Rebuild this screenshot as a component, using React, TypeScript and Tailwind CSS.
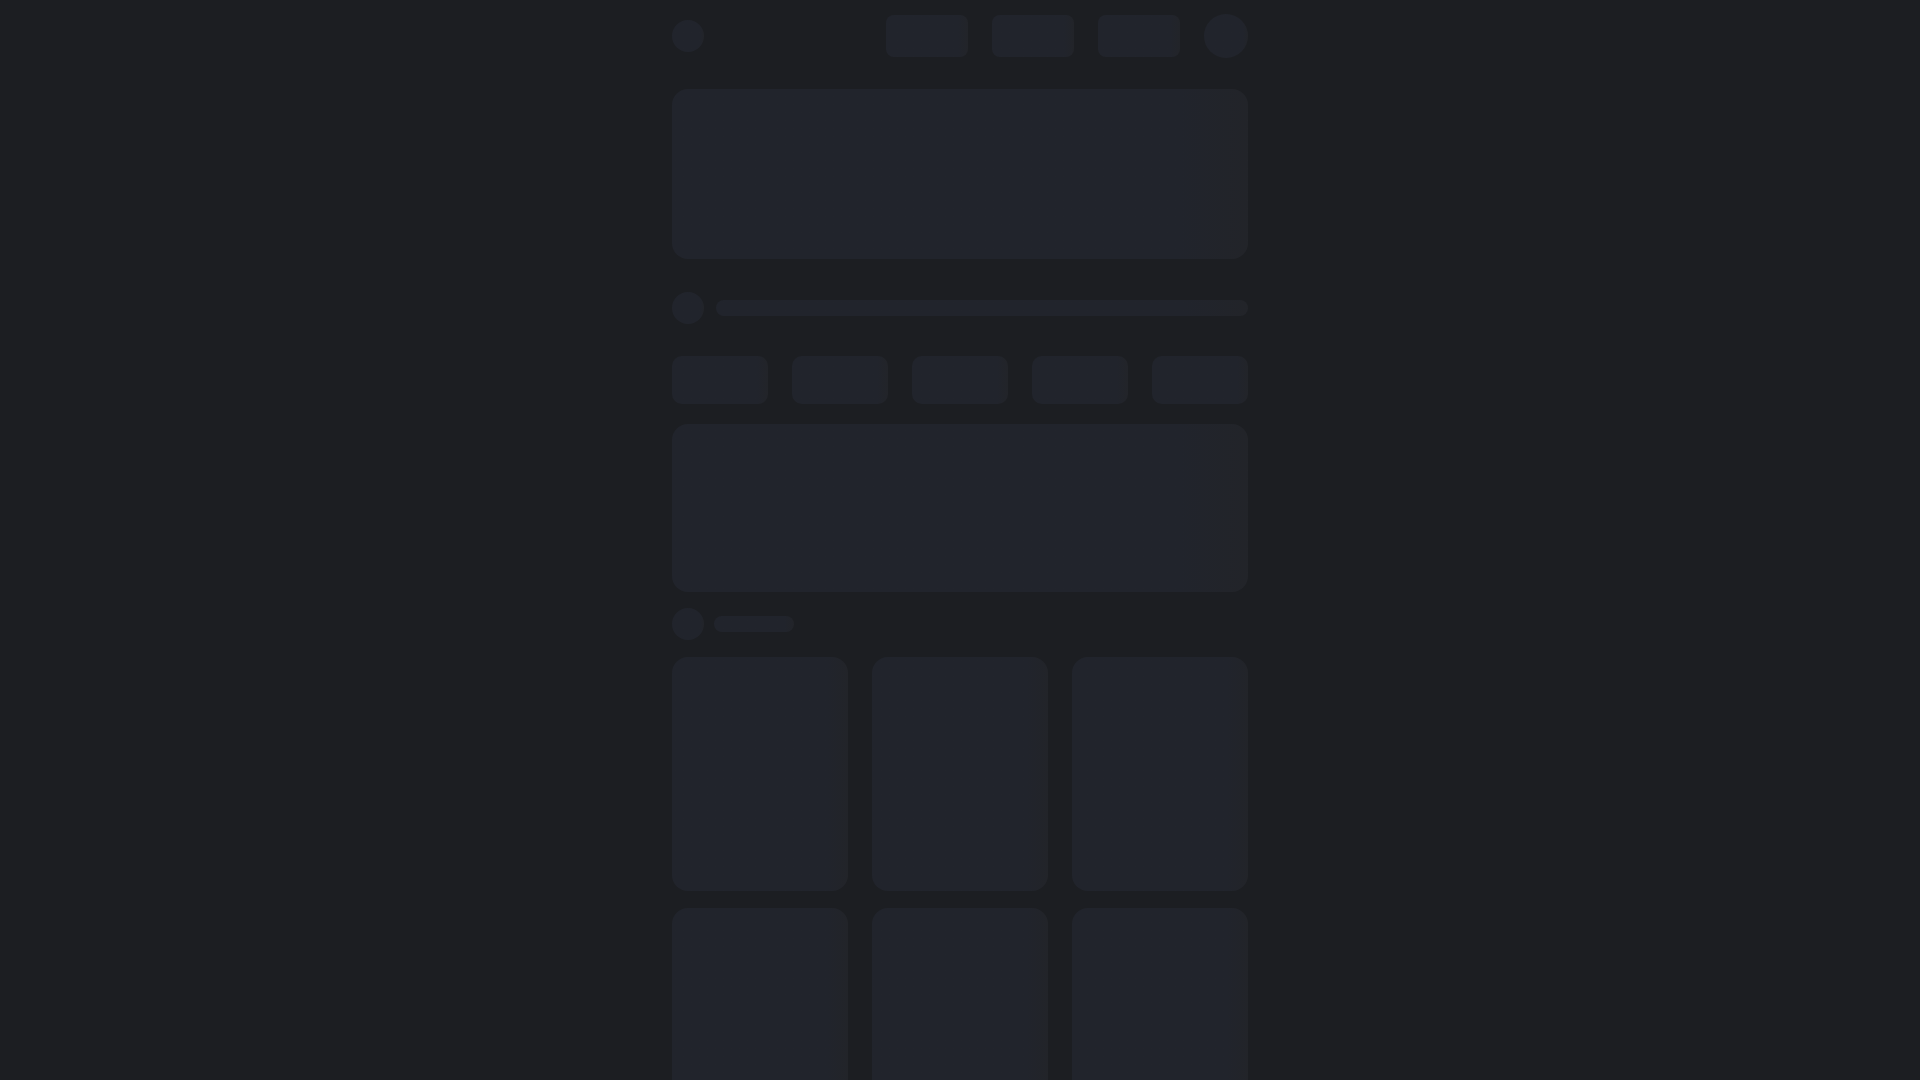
import React from 'react';

// skeleton placeholder block, faint shimmer toward the right edge
const Bone: React.FC<{ className?: string }> = ({ className = '' }) => (
  <div className={`bg-gradient-to-r from-[#21242c] from-88% to-[#222429] ${className}`} />
);

const App: React.FC = () => {
  return (
    <div className="min-h-screen bg-[#1c1e22] font-['Inter',sans-serif]">
      <div className="mx-auto w-[576px] pt-[15px]">
        {/* header */}
        <div className="flex items-center justify-between h-[42px]">
          <Bone className="w-8 h-8 rounded-full" />
          <div className="flex items-center gap-6">
            <Bone className="w-[82px] h-[42px] rounded-lg" />
            <Bone className="w-[82px] h-[42px] rounded-lg" />
            <Bone className="w-[82px] h-[42px] rounded-lg" />
            <Bone className="w-11 h-11 rounded-full" />
          </div>
        </div>

        {/* hero */}
        <Bone className="mt-8 h-[170px] rounded-2xl" />

        {/* title row */}
        <div className="mt-[33px] flex items-center gap-3 h-8">
          <Bone className="w-8 h-8 rounded-full shrink-0" />
          <Bone className="flex-1 h-4 rounded-full" />
        </div>

        {/* tabs */}
        <div className="mt-8 grid grid-cols-5 gap-6">
          {[0, 1, 2, 3, 4].map((i) => (
            <Bone key={i} className="h-12 rounded-[10px]" />
          ))}
        </div>

        {/* banner */}
        <Bone className="mt-5 h-[168px] rounded-2xl" />

        {/* section heading */}
        <div className="mt-4 flex items-center gap-2.5 h-8">
          <Bone className="w-8 h-8 rounded-full shrink-0" />
          <Bone className="w-20 h-4 rounded-full" />
        </div>

        {/* card grid */}
        <div className="mt-[17px] grid grid-cols-3 gap-x-6 gap-y-[17px] pb-8">
          {[0, 1, 2, 3, 4, 5].map((i) => (
            <Bone key={i} className="h-[234px] rounded-2xl" />
          ))}
        </div>
      </div>
    </div>
  );
};

export default App;
